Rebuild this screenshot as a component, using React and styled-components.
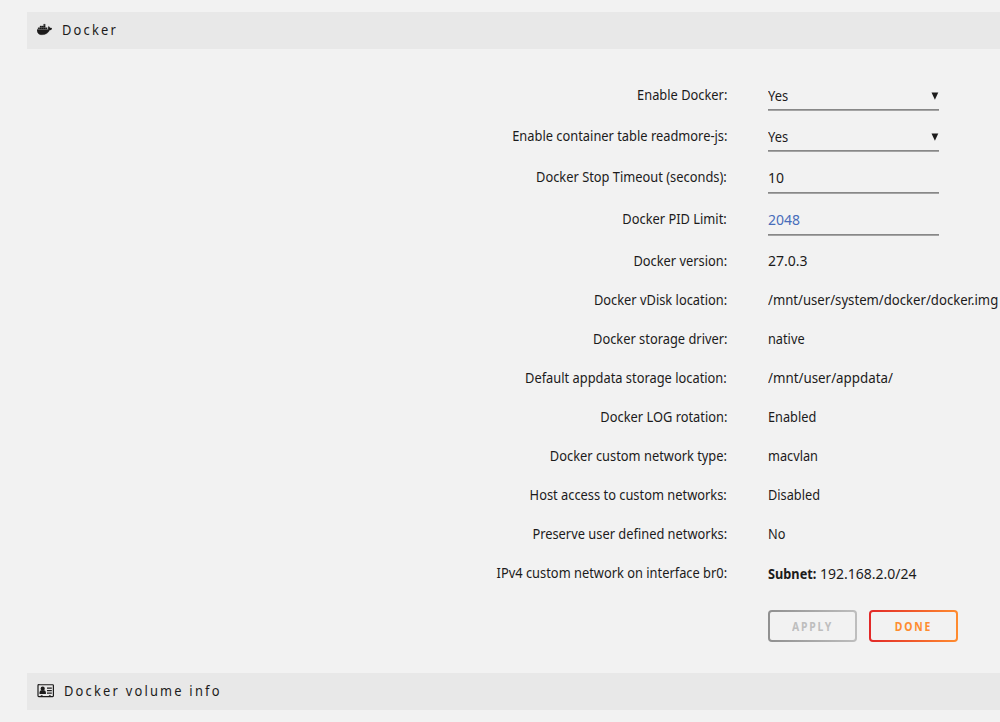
import React from 'react';
import styled, { createGlobalStyle } from 'styled-components';
import { FaDocker } from 'react-icons/fa';

const Global = createGlobalStyle`
  * { box-sizing: border-box; }
  html, body { margin: 0; background: #f2f2f2; overflow: hidden; }
  body { color: #1c1b1b; font: 14px/20px "Noto Sans", "Open Sans", sans-serif; }
`;

const Page = styled.main`
  width: 1000px;
  height: 722px;
  padding: 12px 0 0 27px;
  overflow: hidden;
`;

const TitleBar = styled.header`
  display: flex;
  align-items: center;
  gap: 10px;
  height: 37px;
  padding: 0 0 2px 10px;
  background: #e8e8e8;
  svg { flex: none; }
`;

const Whale = styled(FaDocker)`
  stroke: currentColor;
  stroke-width: 14px;
`;

const Title = styled.span`
  letter-spacing: 2.4px;
  transform: scaleX(0.92);
  transform-origin: left;
`;

const Form = styled.form`
  padding-top: 26px;
  height: 624px;
`;

const Row = styled.div`
  display: grid;
  grid-template-columns: 700px 1fr;
  column-gap: 41px;
  height: ${p => p.$h}px;
  align-items: start;
  white-space: nowrap;
`;

const Label = styled.label`
  justify-self: end;
  padding-top: 10px;
  transform: scaleX(0.918);
  transform-origin: right;
`;

const Value = styled.div`
  padding-top: ${p => p.$top || 10}px;
`;

const Narrow = styled.span`
  display: inline-block;
  transform: scaleX(${p => p.$x || 0.91});
  transform-origin: ${p => p.$origin || 'left'};
`;

const Strong = styled.b`
  display: inline-block;
  width: 48px;
  margin-right: 4px;
  transform: scaleX(0.91);
  transform-origin: left;
`;

const Field = styled.div`
  display: flex;
  justify-content: space-between;
  align-items: center;
  width: 171px;
  height: ${p => (p.$kind === 'select' ? 35 : 36)}px;
  padding-top: ${p => (p.$kind === 'select' ? 8 : 7)}px;
  border-bottom: 1px solid #888;
  box-shadow: 0 1px #a4a4a4;
  color: ${p => (p.$kind === 'auto' ? '#486dba' : 'inherit')};
`;

const Actions = styled.div`
  display: flex;
  gap: 12px;
  padding: 18px 0 0 741px;
`;

const Button = styled.button`
  width: 89px;
  height: 32px;
  padding: 0;
  border: 2px solid transparent;
  border-radius: 4px;
  background: linear-gradient(#f2f2f2, #f2f2f2) padding-box,
    linear-gradient(90deg, ${p => p.$from}, ${p => p.$to}) border-box;
  color: ${p => p.$to};
  font: bold 12px/29px "Noto Sans", sans-serif;
  letter-spacing: 2px;
`;

const fields = [
  ['Enable Docker:', 'Yes', 'select', 41],
  ['Enable container table readmore-js:', 'Yes', 'select', 41],
  ['Docker Stop Timeout (seconds):', '10', 'input', 42],
  ['Docker PID Limit:', '2048', 'auto', 42],
];

const details = [
  ['Docker version:', '27.0.3', 1],
  ['Docker vDisk location:', '/mnt/user/system/docker/docker.img', 0.939],
  ['Docker storage driver:', 'native'],
  ['Default appdata storage location:', '/mnt/user/appdata/', 0.953],
  ['Docker LOG rotation:', 'Enabled'],
  ['Docker custom network type:', 'macvlan'],
  ['Host access to custom networks:', 'Disabled'],
  ['Preserve user defined networks:', 'No'],
];

const Arrow = () => (
  <svg width="8" height="8" viewBox="0 0 8 8"><path d="M.5 .5h6.800L3.900 7.700z" fill="#1c1b1b" /></svg>
);

const Card = () => (
  <svg width="17" height="14" viewBox="0 0 17 14" fill="#1c1b1b">
    <path d="M1.800 .75h13.800a.8.8 0 0 1 .8.8v10.200a.8.8 0 0 1-.8.8H1.800a.8.8 0 0 1-.8-.8V1.500a.8.8 0 0 1 .8-.8z" fill="none" stroke="#1c1b1b" strokeWidth="1.2" />
    <circle cx="5.700" cy="4.700" r="2.100" />
    <path d="M2.500 10V8.300q.3-2 1.900-2h2.600q1.600 0 1.900 2V10zM10 3.500h4.800v1.200H10zM10 6h4.800v1.200H10zM10 8.500h4.800v1.200H10zM3.800 11.200h1.800v1.300H3.800zM11.900 11.200h1.800v1.300h-1.800z" />
  </svg>
);

export default function App() {
  return (
    <Page>
      <Global />
      <TitleBar><Whale size={15} /><Title>Docker</Title></TitleBar>
      <Form>
        {fields.map(([l, v, k, h]) => (
          <Row key={l} $h={h}>
            <Label>{l}</Label>
            <Field $kind={k}>
              <Narrow $x={k === 'select' ? 0.92 : 1}>{v}</Narrow>
              {k === 'select' && <Arrow />}
            </Field>
          </Row>
        ))}
        {details.map(([l, v, x]) => (
          <Row key={l} $h={39.05}><Label>{l}</Label><Value><Narrow $x={x}>{v}</Narrow></Value></Row>
        ))}
        <Row $h={39.05}>
          <Label>IPv4 custom network on interface br0:</Label>
          <Value $top={11}><Strong>Subnet:</Strong>192.168.2.0/24</Value>
        </Row>
        <Actions>
          <Button type="button" $from="#909090" $to="#bebebe"><Narrow $x={0.87} $origin="center">APPLY</Narrow></Button>
          <Button type="button" $from="#e22828" $to="#ff8c2f"><Narrow $x={0.87} $origin="center">DONE</Narrow></Button>
        </Actions>
      </Form>
      <TitleBar><Card /><Title>Docker volume info</Title></TitleBar>
    </Page>
  );
}
